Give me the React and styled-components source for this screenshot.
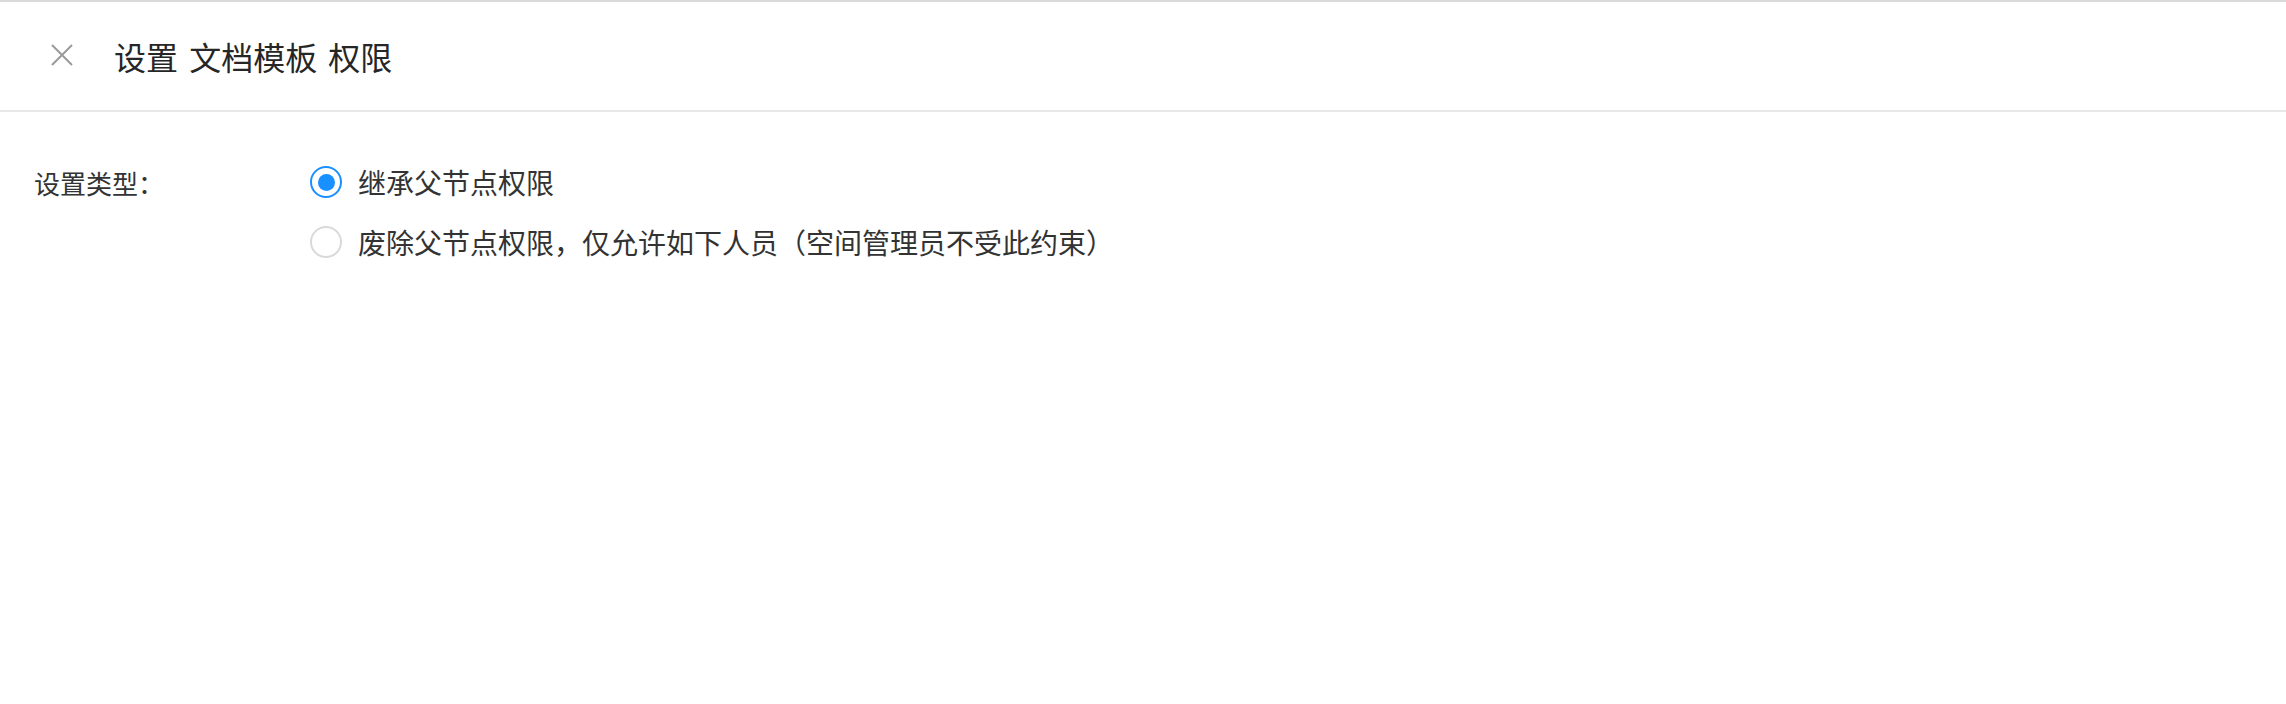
import React, { useState } from 'react';
import styled, { createGlobalStyle } from 'styled-components';

const GlobalStyle = createGlobalStyle`
  html, body {
    margin: 0;
    padding: 0;
    background: #fff;
  }
  body {
    font-family: "Noto Sans CJK SC", "Noto Sans", sans-serif;
    color: #333;
  }
`;

const options = [
  { value: 'inherit', label: '继承父节点权限' },
  { value: 'custom', label: '废除父节点权限，仅允许如下人员（空间管理员不受此约束）' },
];

const App = () => {
  const [type, setType] = useState('inherit');
  return (
    <>
      <GlobalStyle />
      <Page>
        <Header>
          <CloseButton aria-label="close">
            <svg width="22" height="22" viewBox="0 0 22 22">
              <path d="M1 1 L21 21 M21 1 L1 21" stroke="#9a9a9a" strokeWidth="2" fill="none" />
            </svg>
          </CloseButton>
          <Title>设置 文档模板 权限</Title>
        </Header>
        <Body>
          <FormRow>
            <Label>设置类型：</Label>
            <RadioGroup>
              {options.map((o) => (
                <RadioRow key={o.value} onClick={() => setType(o.value)}>
                  <RadioCircle checked={type === o.value} />
                  <RadioText>{o.label}</RadioText>
                </RadioRow>
              ))}
            </RadioGroup>
          </FormRow>
        </Body>
      </Page>
    </>
  );
};

const Page = styled.div`
  width: 100%;
  min-height: 704px;
  border-top: 2px solid #dadada;
  box-sizing: border-box;
`;

const Header = styled.div`
  height: 110px;
  display: flex;
  align-items: center;
  border-bottom: 2px solid #e8e8e8;
  box-sizing: border-box;
  padding-left: 51px;
`;

const CloseButton = styled.button`
  width: 22px;
  height: 22px;
  padding: 0;
  border: none;
  background: transparent;
  cursor: pointer;
  display: flex;
  align-items: center;
  justify-content: center;
  margin-right: 41px;
  margin-top: -2px;
`;

const Title = styled.div`
  font-size: 32px;
  line-height: 1;
  color: #262626;
  white-space: pre;
  word-spacing: 4px;
`;

const Body = styled.div`
  padding: 40px 0 0 34px;
`;

const FormRow = styled.div`
  display: flex;
  align-items: flex-start;
`;

const Label = styled.div`
  width: 276px;
  height: 60px;
  display: flex;
  align-items: center;
  font-size: 26px;
  color: #333;
`;

const RadioGroup = styled.div`
  display: flex;
  flex-direction: column;
`;

const RadioRow = styled.label`
  height: 60px;
  display: flex;
  align-items: center;
  cursor: pointer;
`;

const RadioCircle = styled.span`
  width: 32px;
  height: 32px;
  box-sizing: border-box;
  border-radius: 50%;
  border: 2px solid ${(p) => (p.checked ? '#1890ff' : '#d9d9d9')};
  display: flex;
  align-items: center;
  justify-content: center;
  margin-right: 16px;
  &::after {
    content: '';
    width: 17px;
    height: 17px;
    border-radius: 50%;
    background: #1890ff;
    display: ${(p) => (p.checked ? 'block' : 'none')};
  }
`;

const RadioText = styled.span`
  font-size: 28px;
  color: #333;
  white-space: nowrap;
`;

export default App;
